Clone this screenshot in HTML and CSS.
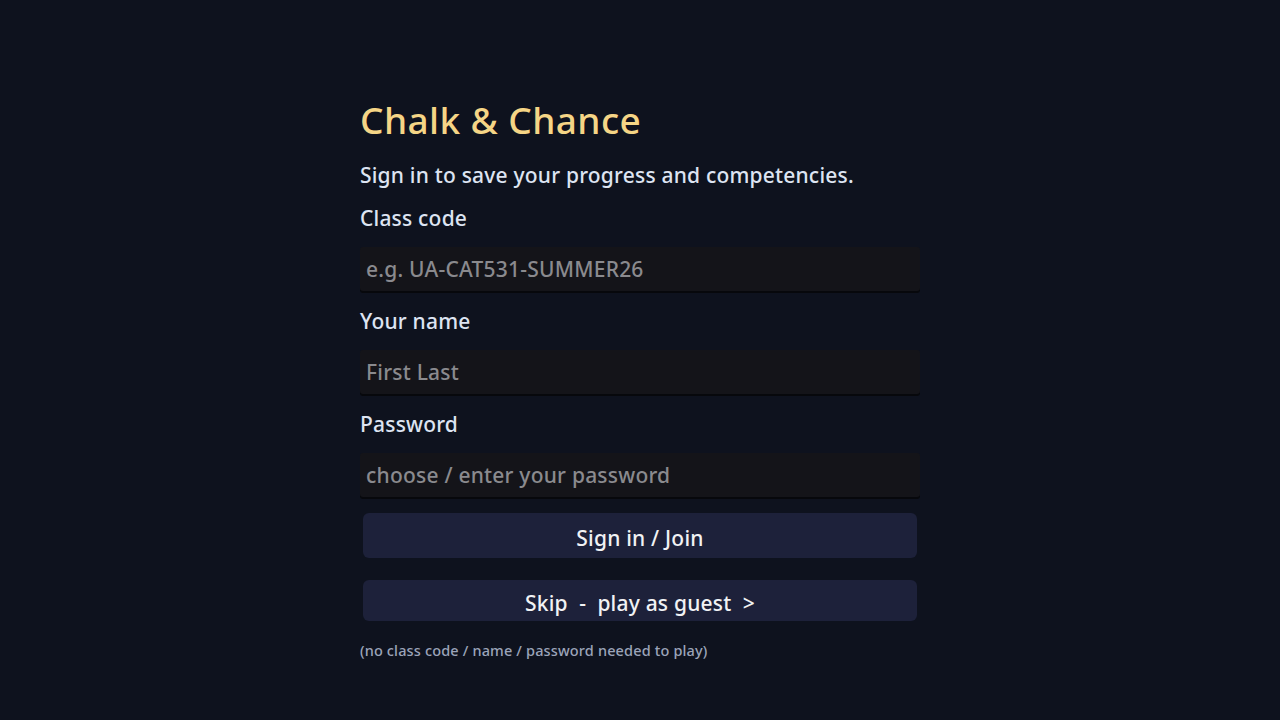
FILE: index.html
```html
<!DOCTYPE html>
<html lang="en">
<head>
<meta charset="utf-8">
<title>Chalk &amp; Chance</title>
<link rel="stylesheet" href="styles.css">
</head>
<body>
<main class="panel">
  <h1 class="title">Chalk &amp; Chance</h1>
  <p class="subtitle">Sign in to save your progress and competencies.</p>
  <label class="label" for="code">Class code</label>
  <input class="field" id="code" type="text" placeholder="e.g. UA-CAT531-SUMMER26">
  <label class="label" for="name">Your name</label>
  <input class="field" id="name" type="text" placeholder="First Last">
  <label class="label" for="pw">Password</label>
  <input class="field" id="pw" type="password" placeholder="choose / enter your password">
  <button class="btn btn-primary" type="button">Sign in / Join</button>
  <button class="btn btn-guest" type="button">Skip&nbsp; - &nbsp;play as guest&nbsp; &gt;</button>
  <p class="note">(no class code / name / password needed to play)</p>
</main>
</body>
</html>
```
FILE: styles.css
```css
html, body {
  margin: 0;
  padding: 0;
  height: 100%;
}
body {
  background: #0e121e;
  font-family: "Noto Sans", "Open Sans", sans-serif;
  font-weight: 500;
  color: #dde4f2;
  letter-spacing: 0.2px;
}
.panel {
  width: 560px;
  margin: 0 auto;
  padding-top: 96px;
  display: flex;
  flex-direction: column;
}
.title {
  margin: 0;
  height: 48px;
  line-height: 48px;
  font-size: 37px;
  font-weight: 500;
  letter-spacing: 0.4px;
  color: #f5d586;
}
.subtitle {
  margin: 17px 0 0;
  height: 28px;
  line-height: 28px;
  font-size: 21px;
}
.label {
  display: block;
  margin-top: 15px;
  height: 28px;
  line-height: 28px;
  font-size: 21px;
}
.field {
  box-sizing: border-box;
  margin: 15px 0 0;
  height: 44px;
  padding: 0 6px;
  border: none;
  border-radius: 3px;
  background: #141419;
  box-shadow: 0 2px 0 #07080c;
  font-family: inherit;
  font-weight: 500;
  font-size: 21px;
  letter-spacing: 0.22px;
  color: #dde4f2;
  outline: none;
}
.field::placeholder { color: #8a8a8e; }
.field + .label { margin-top: 16px; }
.btn {
  margin: 0 3px;
  border: none;
  border-radius: 6px;
  background: #1d213a;
  color: #f1f2f4;
  font-family: inherit;
  font-weight: 500;
  font-size: 21px;
  letter-spacing: 0.2px;
  padding: 0;
}
.btn-primary {
  margin-top: 16px;
  height: 45px;
  padding-top: 5px;
}
.btn-guest {
  margin-top: 22px;
  height: 41px;
  padding-top: 4px;
}
.note {
  margin: 19px 0 0;
  line-height: 20px;
  font-size: 14.5px;
  letter-spacing: 0.15px;
  color: #9ba4b9;
}
```
